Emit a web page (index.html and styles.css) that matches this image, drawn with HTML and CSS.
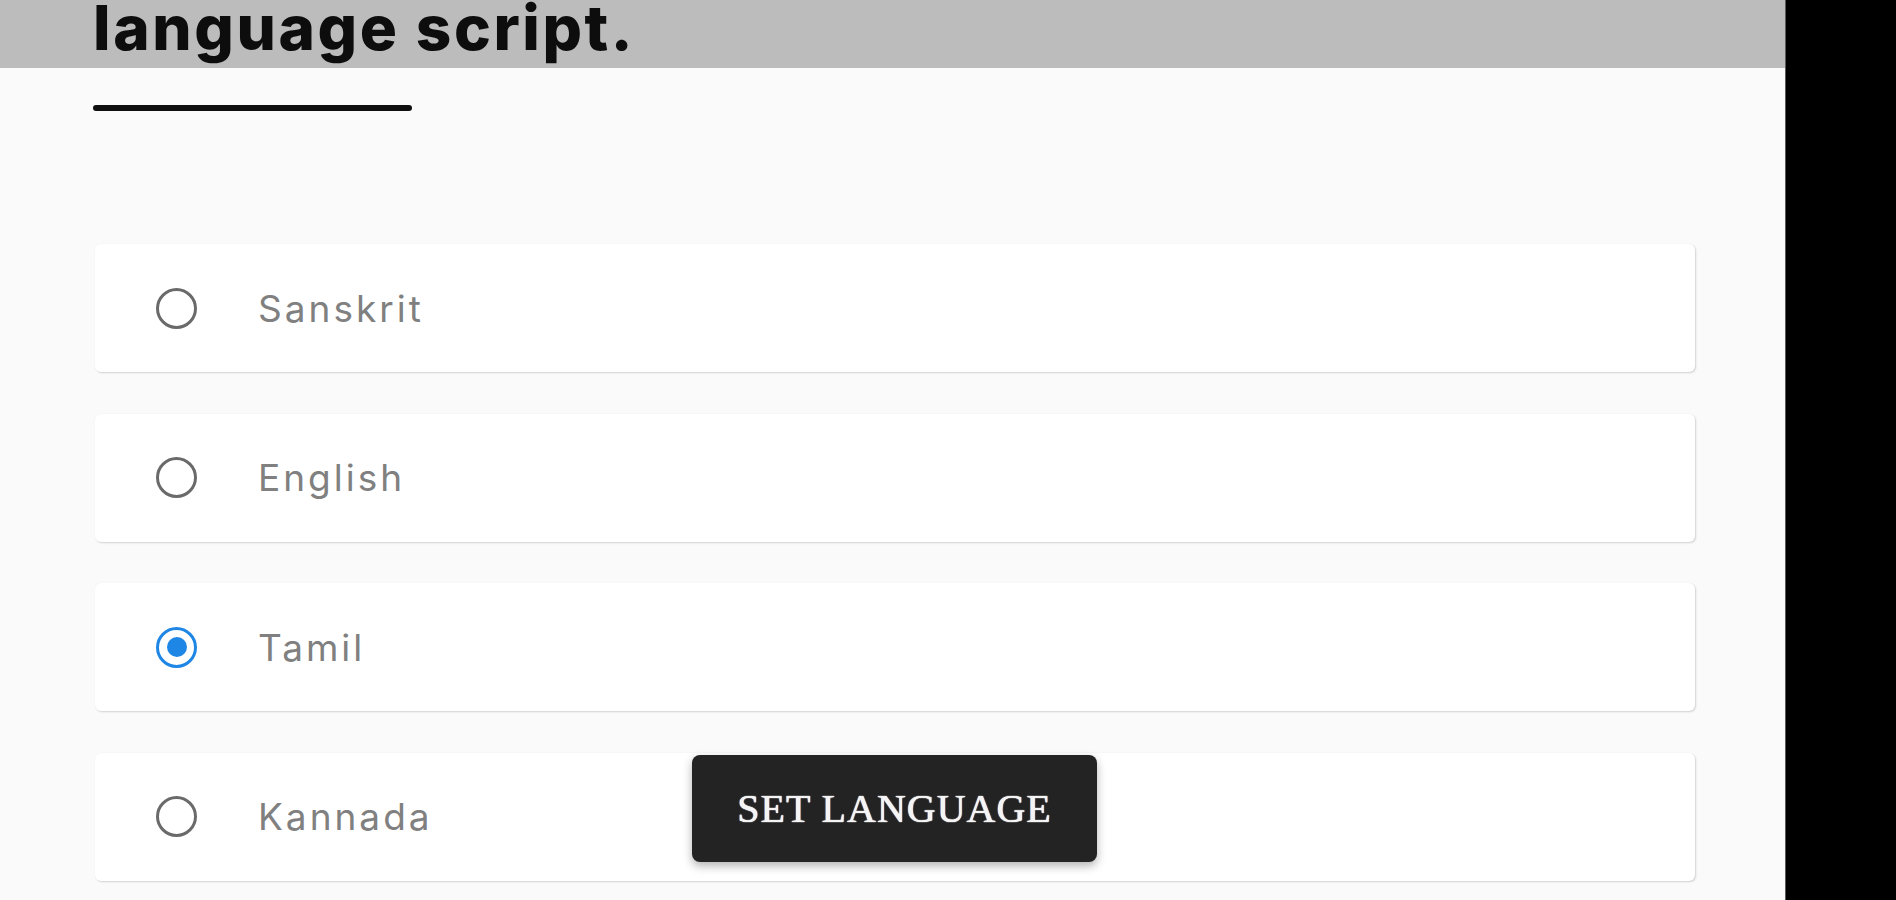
FILE: index.html
```html
<!DOCTYPE html>
<html lang="en">
<head>
<meta charset="utf-8">
<title>Set language script</title>
<link rel="stylesheet" href="styles.css">
</head>
<body>
<div class="layout">
  <main class="page">
    <header class="topbar">
      <h1 class="title">language script.</h1>
    </header>
    <div class="content">
      <div class="rule"></div>
      <ul class="options">
        <li class="option"><span class="radio"></span><span class="label">Sanskrit</span></li>
        <li class="option"><span class="radio"></span><span class="label">English</span></li>
        <li class="option"><span class="radio checked"></span><span class="label">Tamil</span></li>
        <li class="option"><span class="radio"></span><span class="label">Kannada</span></li>
      </ul>
    </div>
    <button class="set-btn" type="button">SET LANGUAGE</button>
  </main>
  <aside class="side"></aside>
</div>
</body>
</html>
```

FILE: styles.css
```css
* { box-sizing: border-box; }
html, body {
  margin: 0;
  padding: 0;
  height: 100%;
  overflow: hidden;
}
body {
  font-family: "Inter", "Liberation Sans", sans-serif;
  background: #000;
}
.layout {
  display: flex;
  height: 900px;
}
.page {
  width: 1786px;
  flex: none;
  background: #fafafa;
  border-right: 1px solid #5a5a5a;
  position: relative;
  overflow: hidden;
}
.side {
  flex: 1;
  background: #000;
}
.topbar {
  height: 68px;
  background: #bcbcbc;
  overflow: hidden;
  padding-left: 93px;
}
.title {
  margin: 0;
  font-family: "Inter", "Liberation Sans", sans-serif;
  font-weight: 800;
  font-size: 62px;
  line-height: 55px;
  letter-spacing: 2.6px;
  color: #0d0d0d;
  white-space: nowrap;
}
.content {
  padding-left: 93px;
}
.rule {
  margin-top: 37px;
  width: 319px;
  height: 6px;
  border-radius: 3px;
  background: #0f0f0f;
}
.options {
  list-style: none;
  margin: 133px 0 0 2px;
  padding: 0;
  display: flex;
  flex-direction: column;
  gap: 41.5px;
  width: 1600px;
}
.option {
  height: 128px;
  background: #fff;
  border-radius: 6px;
  box-shadow: 1px 1px 2px rgba(0,0,0,0.16), 0 0 1px rgba(0,0,0,0.06);
  display: flex;
  align-items: center;
  padding-left: 61px;
}
.radio {
  width: 41px;
  height: 41px;
  border: 3.5px solid #6a6a6a;
  border-radius: 50%;
  flex: none;
  display: flex;
  align-items: center;
  justify-content: center;
}
.radio.checked {
  border-color: #1e86e4;
}
.radio.checked::after {
  content: "";
  width: 20px;
  height: 20px;
  border-radius: 50%;
  background: #1e86e4;
}
.label {
  margin-left: 61px;
  font-size: 37px;
  letter-spacing: 3px;
  color: #808080;
  font-weight: 400;
}
.set-btn {
  position: absolute;
  left: 692px;
  top: 755px;
  width: 405px;
  height: 107px;
  background: #232323;
  border: none;
  border-radius: 8px;
  box-shadow: 0 4px 10px rgba(0,0,0,0.3);
  color: #f4f4f4;
  font-family: "Liberation Serif", serif;
  font-size: 40px;
  letter-spacing: 1px;
  padding: 0;
  text-shadow: 0 0 1px #fff, 0 0 1px #fff;
}
```
